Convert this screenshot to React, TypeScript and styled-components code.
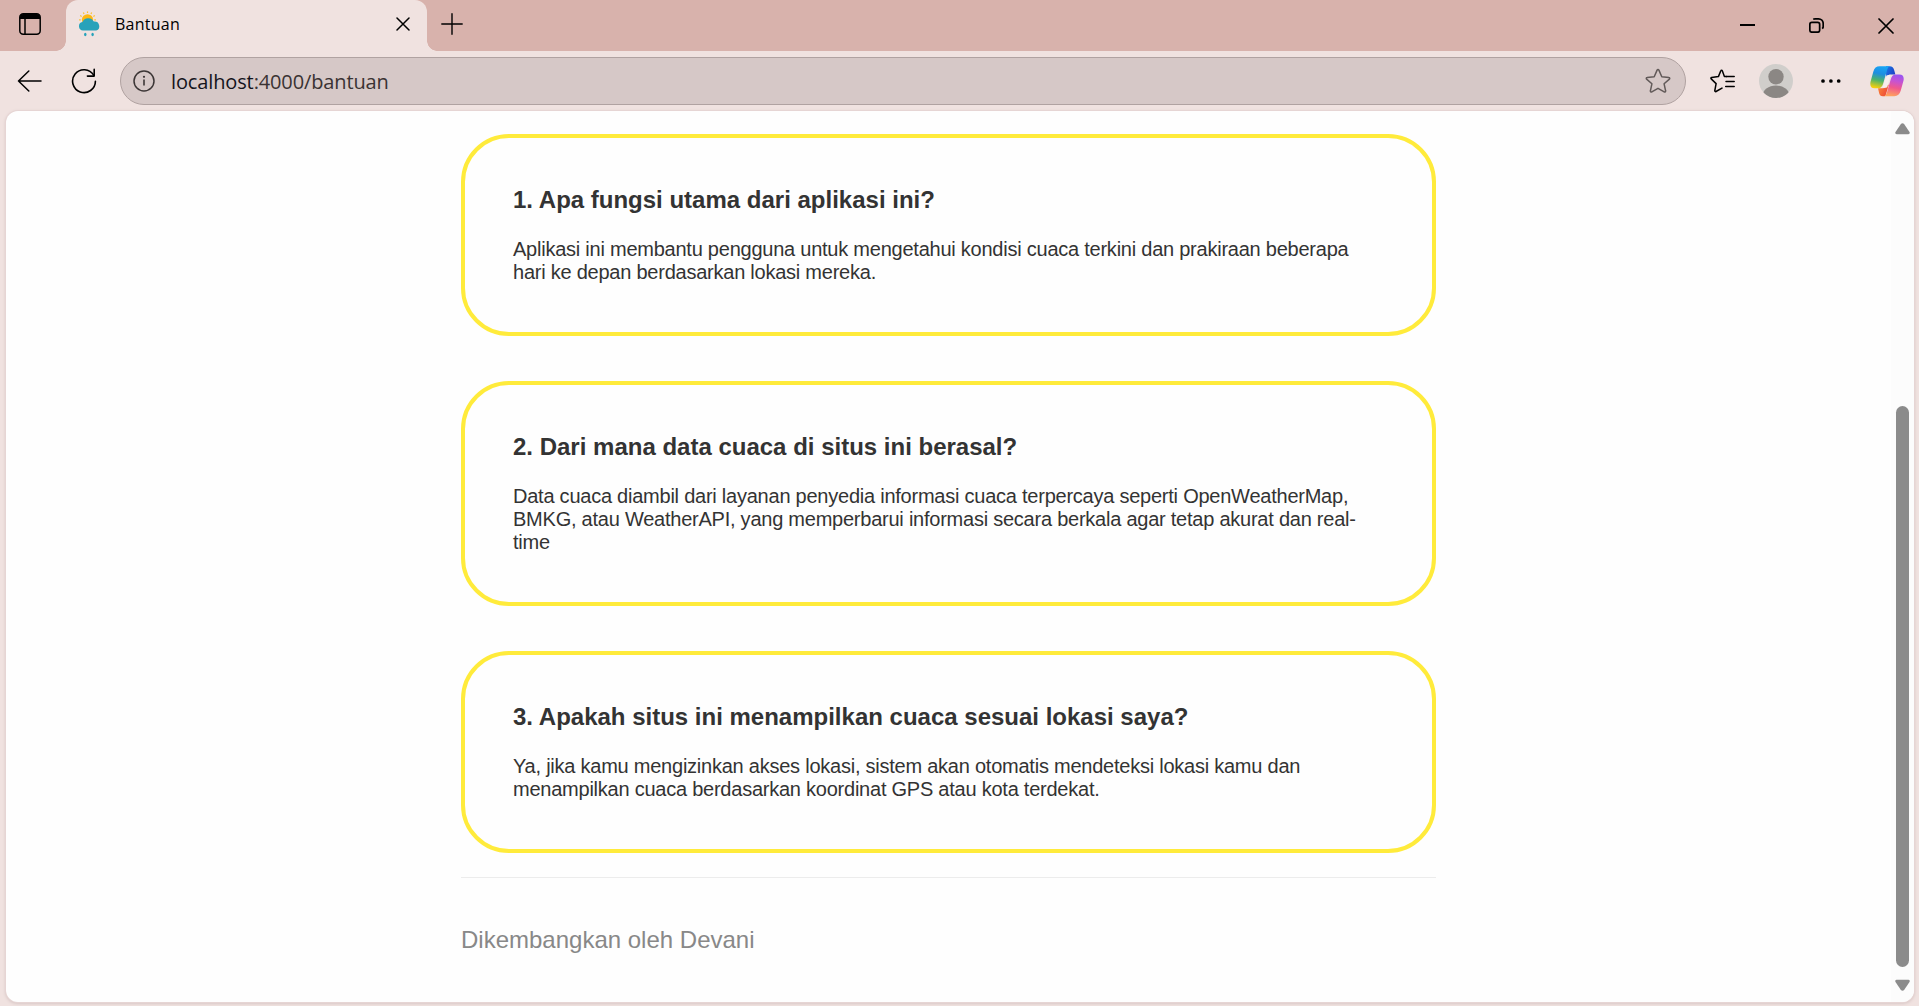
import React from "react";
import styled, { createGlobalStyle } from "styled-components";

const GlobalStyle = createGlobalStyle`
  * { box-sizing: border-box; }
  html, body { margin: 0; height: 100%; overflow: hidden; }
  h3, p { margin: 0; }
`;

const uiFont = `"Open Sans", "Noto Sans", sans-serif`;

const Window = styled.div`
  display: flex;
  flex-direction: column;
  height: 1006px;
  background: #f0e2e0;
  font-family: ${uiFont};
  color: #000;
`;

const TabStrip = styled.header`
  display: flex;
  height: 51px;
  flex: none;
  background: #d8b2ac;
`;

const StripButton = styled.div<{ $w: number }>`
  width: ${(p) => p.$w}px;
  height: 100%;
  display: flex;
  align-items: center;
  justify-content: center;
  svg { display: block; }
`;

const TabActions = styled(StripButton)`
  padding: 0 6px 3px 0;
`;

const Tab = styled.div`
  position: relative;
  display: flex;
  align-items: center;
  width: 361px;
  padding: 0 17px 3px 12px;
  border-radius: 12px 12px 0 0;
  background: #f0e2e0;
  &::before, &::after {
    content: "";
    position: absolute;
    bottom: 0;
    width: 10px;
    height: 10px;
  }
  &::before {
    left: -10px;
    background: radial-gradient(circle at 0 0, transparent 9.5px, #f0e2e0 10px);
  }
  &::after {
    right: -10px;
    background: radial-gradient(circle at 100% 0, transparent 9.5px, #f0e2e0 10px);
  }
`;

const TabTitle = styled.span`
  flex: 1;
  padding-left: 14px;
  font-size: 16px;
  line-height: 24px;
  letter-spacing: 0.25px;
`;

const NewTab = styled(StripButton)`
  padding: 0 0 4px 0;
`;

const Caption = styled.div`
  display: flex;
  margin-left: auto;
`;

const MinimizeButton = styled(StripButton)`
  padding-bottom: 1px;
`;

const Toolbar = styled.div`
  display: flex;
  align-items: center;
  height: 60px;
  flex: none;
`;

const NavButtons = styled.div`
  display: flex;
  align-items: center;
  width: 120px;
  padding-left: 17px;
  gap: 29px;
  svg { display: block; }
`;

const AddressBar = styled.div`
  display: flex;
  align-items: center;
  width: 1566px;
  height: 48px;
  padding: 0 14px 0 12px;
  border: 1.5px solid #b0a2a1;
  border-radius: 24px;
  background: #d6c8c7;
`;

const Url = styled.span`
  flex: 1;
  padding: 1px 0 0 16px;
  font-size: 20px;
  line-height: 28px;
  letter-spacing: -0.13px;
  color: #3a3333;
`;

const Host = styled.span`
  color: #14141c;
`;

const ToolIcons = styled.div`
  display: flex;
  align-items: center;
  flex: 1;
  padding-left: 24px;
  svg { display: block; }
`;

const Slot = styled.div<{ $w: number }>`
  width: ${(p) => p.$w}px;
`;

const Viewport = styled.div`
  display: flex;
  width: 1908px;
  height: 891px;
  margin-left: 6px;
  border-radius: 12px;
  background: #fefefe;
  box-shadow: 0 0 0 1px #e6d5d4, 0 1px 3px 1px #d9c8c7;
  overflow: hidden;
`;

const Page = styled.main`
  flex: 1;
  padding: 23px 0 0 455px;
  font-family: "Liberation Sans", Arial, sans-serif;
`;

const Column = styled.div`
  width: 975px;
`;

const CardList = styled.section`
  display: flex;
  flex-direction: column;
  gap: 45px;
`;

const Card = styled.article`
  padding: 48px;
  border: 4px solid #ffeb3b;
  border-radius: 48px;
  color: #333;
`;

const Question = styled.h3`
  margin-bottom: 24px;
  font-size: 24px;
  line-height: 28px;
  font-weight: 700;
`;

const Answer = styled.p`
  font-size: 20px;
  line-height: 23px;
  letter-spacing: -0.237px;
  white-space: pre-line;
`;

const Footer = styled.footer`
  margin-top: 24px;
  padding-top: 48px;
  border-top: 1px solid #ececec;
  font-size: 24px;
  line-height: 28px;
  color: #888;
`;

const ScrollTrack = styled.div`
  display: flex;
  flex-direction: column;
  align-items: center;
  width: 23px;
  padding: 12px 0 11px;
  background: #fcfcfc;
  svg { display: block; }
`;

const Thumb = styled.div`
  width: 13px;
  height: 561px;
  margin: auto 0 12px;
  border-radius: 7px;
  background: #8b8b8b;
`;

const faqs = [
  {
    q: "1. Apa fungsi utama dari aplikasi ini?",
    a: "Aplikasi ini membantu pengguna untuk mengetahui kondisi cuaca terkini dan prakiraan beberapa\nhari ke depan berdasarkan lokasi mereka.",
  },
  {
    q: "2. Dari mana data cuaca di situs ini berasal?",
    a: "Data cuaca diambil dari layanan penyedia informasi cuaca terpercaya seperti OpenWeatherMap,\nBMKG, atau WeatherAPI, yang memperbarui informasi secara berkala agar tetap akurat dan real-\ntime",
  },
  {
    q: "3. Apakah situs ini menampilkan cuaca sesuai lokasi saya?",
    a: "Ya, jika kamu mengizinkan akses lokasi, sistem akan otomatis mendeteksi lokasi kamu dan\nmenampilkan cuaca berdasarkan koordinat GPS atau kota terdekat.",
  },
];

const WorkspaceIcon = () => (
  <svg width="22" height="22" viewBox="0 0 22 22">
    <rect x="0.8" y="0.8" width="20.4" height="20.4" rx="3.5" fill="none" stroke="#000" strokeWidth="1.5" />
    <path d="M1 6V4a3 3 0 0 1 3-3h14a3 3 0 0 1 3 3v2z" />
    <path d="M6 5v16" stroke="#000" strokeWidth="1.5" />
  </svg>
);

const WeatherIcon = () => {
  const rays = Array.from({ length: 12 }, (_, i) => i * 30);
  return (
    <svg width="23" height="26" viewBox="0 0 23 26">
      {rays.map((r) => (
        <path key={r} d="M9.5 0.4v1.6" stroke="#fbc02d" strokeWidth="1.2" transform={`rotate(${r} 9.5 8.8)`} />
      ))}
      <circle cx="9.5" cy="8.8" r="5.6" fill="#fdb813" />
      <path
        d="M5 19.600a4.300 4.300 0 0 1-.6-8.500A6.300 6.300 0 0 1 15.800 10.600a4.700 4.700 0 0 1 2.500 9z"
        fill="#27a2ba"
      />
      <ellipse cx="7.3" cy="23.5" rx="1.2" ry="1.7" fill="#27a2ba" />
      <ellipse cx="14.6" cy="23.5" rx="1.2" ry="1.7" fill="#27a2ba" />
    </svg>
  );
};

const CrossIcon = ({ size, weight = 1.5 }: { size: number; weight?: number }) => (
  <svg width={size} height={size} viewBox={`0 0 ${size} ${size}`}>
    <path
      d={`M1 1L${size - 1} ${size - 1}M${size - 1} 1L1 ${size - 1}`}
      stroke="#000"
      strokeWidth={weight}
      strokeLinecap="round"
    />
  </svg>
);

const PlusIcon = () => (
  <svg width="22" height="22" viewBox="0 0 22 22">
    <path d="M11 0.8v20.4M0.8 11h20.4" stroke="#000" strokeWidth="1.4" strokeLinecap="round" />
  </svg>
);

const MinimizeIcon = () => (
  <svg width="15" height="2" viewBox="0 0 15 2">
    <path d="M0 1h15" stroke="#000" strokeWidth="2" />
  </svg>
);

const RestoreIcon = () => (
  <svg width="15" height="15" viewBox="0 0 15 15" fill="none" stroke="#000" strokeWidth="1.7">
    <rect x="0.85" y="4.4" width="9.8" height="9.8" rx="2" />
    <path d="M4.2 1.2C4.8 0.9 5.4 0.85 6 0.85H9.5A4.7 4.7 0 0 1 14.2 5.5V8.5c0 1-.4 1.7-1 2.2" />
  </svg>
);

const BackIcon = () => (
  <svg width="25" height="22" viewBox="0 0 25 22" fill="none" stroke="#000" strokeWidth="1.5" strokeLinecap="round" strokeLinejoin="round">
    <path d="M24 11H1.5M11.8 1L1.5 11l10.3 10" />
  </svg>
);

const ReloadIcon = () => (
  <svg width="26" height="26" viewBox="0 0 26 26" fill="none" stroke="#000" strokeWidth="1.6" strokeLinecap="round" strokeLinejoin="round">
    <path d="M24.4 13.2A11.4 11.4 0 1 1 22.7 7.2" />
    <path d="M23.2 1.4v6.7h-6.8" />
  </svg>
);

const InfoIcon = () => (
  <svg width="22" height="22" viewBox="0 0 22 22">
    <circle cx="11" cy="11" r="10" fill="none" stroke="#3c3636" strokeWidth="1.5" />
    <path d="M11 9.6v6" stroke="#3c3636" strokeWidth="1.6" />
    <circle cx="11" cy="6.8" r="1.1" fill="#3c3636" />
  </svg>
);

const StarIcon = () => (
  <svg width="26" height="26" viewBox="0 0 26 26" fill="none" stroke="#625a59" strokeWidth="1.5" strokeLinejoin="round">
    <path d="M12.1 2.1a1 1 0 0 1 1.8 0l2.9 6.6 7.1.8a.9.9 0 0 1 .5 1.6l-5.3 4.7 1.5 7a.9.9 0 0 1-1.4 1L13 20.300l-6.200 3.500a.9.9 0 0 1-1.400-1l1.500-7L1.600 11.100a.9.9 0 0 1 .5-1.600l7.100-.8z" />
  </svg>
);

const FavoritesIcon = () => (
  <svg width="25" height="24" viewBox="0 0 25 24" fill="none" stroke="#000" strokeWidth="1.5" strokeLinejoin="round" strokeLinecap="round">
    <path d="M16.200 7.600L14.400 7.400l-2.100-5.600a.8.8 0 0 0-1.500 0L8.400 7.600l-6.800.9a.8.8 0 0 0-.4 1.400l4.900 4.700-1.300 7.100a.8.8 0 0 0 1.200.8L12 19.100" />
    <path d="M16.200 7.600h8M16 12.500h8.200M15.700 17.400h8.500" />
  </svg>
);

const AvatarIcon = () => (
  <svg width="34" height="34" viewBox="0 0 34 34">
    <defs>
      <clipPath id="avatarClip"><circle cx="17" cy="17" r="17" /></clipPath>
    </defs>
    <circle cx="17" cy="17" r="17" fill="#d0cecb" />
    <g clipPath="url(#avatarClip)" fill="#8b8784">
      <circle cx="17" cy="12.700" r="7.700" />
      <ellipse cx="17" cy="32" rx="13.500" ry="10.500" />
    </g>
  </svg>
);

const DotsIcon = () => (
  <svg width="20" height="4" viewBox="0 0 20 4">
    <circle cx="2" cy="2" r="1.850" />
    <circle cx="9.900" cy="2" r="1.850" />
    <circle cx="17.700" cy="2" r="1.850" />
  </svg>
);

const CopilotIcon = () => (
  <svg width="34" height="31" viewBox="0 0 34 31">
    <defs>
      <linearGradient id="cpLeft" x1="0.6" y1="0" x2="0.4" y2="1">
        <stop offset="0" stopColor="#17a5f5" />
        <stop offset="0.35" stopColor="#1e8ee0" />
        <stop offset="0.65" stopColor="#4cb36a" />
        <stop offset="1" stopColor="#f6cf0c" />
      </linearGradient>
      <linearGradient id="cpTop" x1="0" y1="0" x2="1" y2="0.6">
        <stop offset="0" stopColor="#1b7ae8" />
        <stop offset="1" stopColor="#1d3fc4" />
      </linearGradient>
      <linearGradient id="cpRight" x1="0.6" y1="0" x2="0.4" y2="1">
        <stop offset="0" stopColor="#9a55f0" />
        <stop offset="0.3" stopColor="#c653d2" />
        <stop offset="0.6" stopColor="#f0588e" />
        <stop offset="1" stopColor="#ffa45c" />
      </linearGradient>
      <linearGradient id="cpBottom" x1="0" y1="0" x2="1" y2="0.5">
        <stop offset="0" stopColor="#fb8c3a" />
        <stop offset="1" stopColor="#ee4a36" />
      </linearGradient>
    </defs>
    <path d="M16 0.300h3.500c2.800 0 4 1.600 4.700 4l1.200 4.200h-4c-3 0-4.500 1-5.300 3.500z" fill="url(#cpTop)" />
    <path d="M8 22.300h4.400c2.800 0 4.200-1.200 5-3.600l1.400 0-2.600 8.800c-.5 1.700-1 2.700-2 2.700h-1.500c-2 0-3-1.200-3.600-3.300z" fill="url(#cpBottom)" />
    <path d="M20.600 8.600L16.500 9.500L12.500 21.800L17.200 21.400z" fill="#f7edec" />
    <path d="M9.700 0.300h11.200c-2.300 0-3.200 1.500-4 4.200l-3.500 12.300c-1 3.600-2.300 5.500-5.300 5.500H4.600C1 22.300-.4 19.800.6 15.500L3.300 5.700C4.300 2.100 6.300.3 9.700.3z" fill="url(#cpLeft)" />
    <path d="M24.300 30.200H13.100c2.300 0 3.200-1.500 4-4.200l3.500-12.300c1-3.600 2.300-5.300 5.300-5.300h3.500c3.600 0 5 2.500 4 6.600l-2.700 9.800c-1 3.600-3 5.400-6.400 5.400z" fill="url(#cpRight)" />
  </svg>
);

const Triangle = ({ down = false }: { down?: boolean }) => (
  <svg width="15" height="12" viewBox="0 0 15 12">
    <path
      d="M5.900 1.100Q7.500-.5 9.100 1.100L14.500 9Q15.400 11.200 13.300 11.200H1.700Q-.4 11.200 .5 9z"
      fill="#8b8b8b"
      transform={down ? "rotate(180 7.500 6)" : undefined}
    />
  </svg>
);

export default function App() {
  return (
    <Window>
      <GlobalStyle />
      <TabStrip>
        <TabActions $w={66}><WorkspaceIcon /></TabActions>
        <Tab>
          <WeatherIcon />
          <TabTitle>Bantuan</TabTitle>
          <CrossIcon size={14} />
        </Tab>
        <NewTab $w={50}><PlusIcon /></NewTab>
        <Caption>
          <MinimizeButton $w={67}><MinimizeIcon /></MinimizeButton>
          <StripButton $w={71}><RestoreIcon /></StripButton>
          <StripButton $w={67}><CrossIcon size={16} weight={1.7} /></StripButton>
        </Caption>
      </TabStrip>
      <Toolbar>
        <NavButtons><BackIcon /><ReloadIcon /></NavButtons>
        <AddressBar>
          <InfoIcon />
          <Url><Host>localhost</Host>:4000/bantuan</Url>
          <StarIcon />
        </AddressBar>
        <ToolIcons>
          <Slot $w={49}><FavoritesIcon /></Slot>
          <Slot $w={62}><AvatarIcon /></Slot>
          <Slot $w={49}><DotsIcon /></Slot>
          <CopilotIcon />
        </ToolIcons>
      </Toolbar>
      <Viewport>
        <Page>
          <Column>
            <CardList>
              {faqs.map((f) => (
                <Card key={f.q}>
                  <Question>{f.q}</Question>
                  <Answer>{f.a}</Answer>
                </Card>
              ))}
            </CardList>
            <Footer>Dikembangkan oleh Devani</Footer>
          </Column>
        </Page>
        <ScrollTrack>
          <Triangle />
          <Thumb />
          <Triangle down />
        </ScrollTrack>
      </Viewport>
    </Window>
  );
}
